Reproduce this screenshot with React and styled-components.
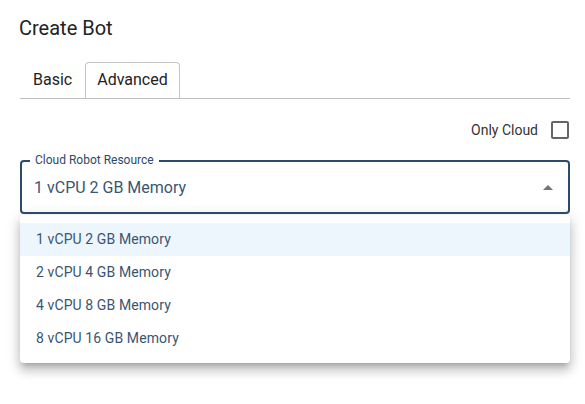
import styled, { createGlobalStyle } from 'styled-components';

const options = ['1 vCPU 2 GB Memory', '2 vCPU 4 GB Memory', '4 vCPU 8 GB Memory', '8 vCPU 16 GB Memory'];

function App() {
	return (
		<>
			<GlobalStyle />
			<Page>
				<Title>Create Bot</Title>
				<Tabs>
					<Tab>Basic</Tab>
					<Tab $active>Advanced</Tab>
				</Tabs>
				<CheckRow>
					<span>Only Cloud</span>
					<Box />
				</CheckRow>
				<Field>
					<Legend>Cloud Robot Resource</Legend>
					<Value>{options[0]}</Value>
					<Arrow />
				</Field>
				<Menu>
					{options.map((o, i) => (
						<Item key={o} $selected={i === 0}>{o}</Item>
					))}
				</Menu>
			</Page>
		</>
	);
}

const GlobalStyle = createGlobalStyle`
	body{
		margin: 0;
		background: #fff;
		font-family: Roboto, 'Liberation Sans', sans-serif;
	}
`;

const Page = styled.div`
	padding: 15px 15px 40px 20px;
	display: flex;
	flex-direction: column;
`;

const Title = styled.h1`
	margin: 0 0 0 -1px;
	font-size: 20px;
	font-weight: 400;
	color: #222;
	line-height: 26px;
`;

const Tabs = styled.div`
	margin-top: 21px;
	display: flex;
	border-bottom: 1px solid #bdbdbd;
	height: 36px;
`;

const Tab = styled.div`
	padding: 0 ${p => (p.$active ? '11px' : '12px')};
	font-size: 16px;
	line-height: 34px;
	color: #222;
	border: 1px solid ${p => (p.$active ? '#c4c4c4' : 'transparent')};
	border-bottom: none;
	border-radius: 4px 4px 0 0;
	background: #fff;
	margin-bottom: -1px;
	height: 36px;
	box-sizing: border-box;
`;

const CheckRow = styled.div`
	margin-top: 22px;
	align-self: flex-end;
	display: flex;
	align-items: center;
	gap: 13px;
	font-size: 14px;
	color: #333;
	padding-right: 1px;
`;

const Box = styled.div`
	width: 18px;
	height: 18px;
	box-sizing: border-box;
	border: 2px solid #666;
	border-radius: 2px;
`;

const Field = styled.div`
	position: relative;
	margin-top: 21px;
	height: 54px;
	box-sizing: border-box;
	border: 2px solid #2c4a6a;
	border-radius: 4px;
	display: flex;
	align-items: center;
	padding: 0 12px;
`;

const Legend = styled.span`
	position: absolute;
	top: -9px;
	left: 8px;
	padding: 0 5px;
	background: #fff;
	font-size: 12px;
	line-height: 14px;
	color: #2c4a6a;
`;

const Value = styled.span`
	flex: 1;
	font-size: 16px;
	color: #3a5572;
	padding-top: 1px;
`;

const Arrow = styled.span`
	width: 0;
	height: 0;
	border-left: 5px solid transparent;
	border-right: 5px solid transparent;
	border-bottom: 5px solid #757575;
	margin-right: 3px;
`;

const Menu = styled.ul`
	margin: 1px 0 0;
	padding: 8px 0;
	list-style: none;
	background: #fff;
	border-radius: 4px;
	box-shadow: 0 5px 5px -3px rgba(0,0,0,0.2), 0 8px 10px 1px rgba(0,0,0,0.14), 0 3px 14px 2px rgba(0,0,0,0.12);
`;

const Item = styled.li`
	height: 33px;
	line-height: 33px;
	padding: 0 16px;
	font-size: 14px;
	letter-spacing: 0.1px;
	color: #3a5572;
	background: ${p => (p.$selected ? '#edf5fd' : '#fff')};
`;

export default App;
